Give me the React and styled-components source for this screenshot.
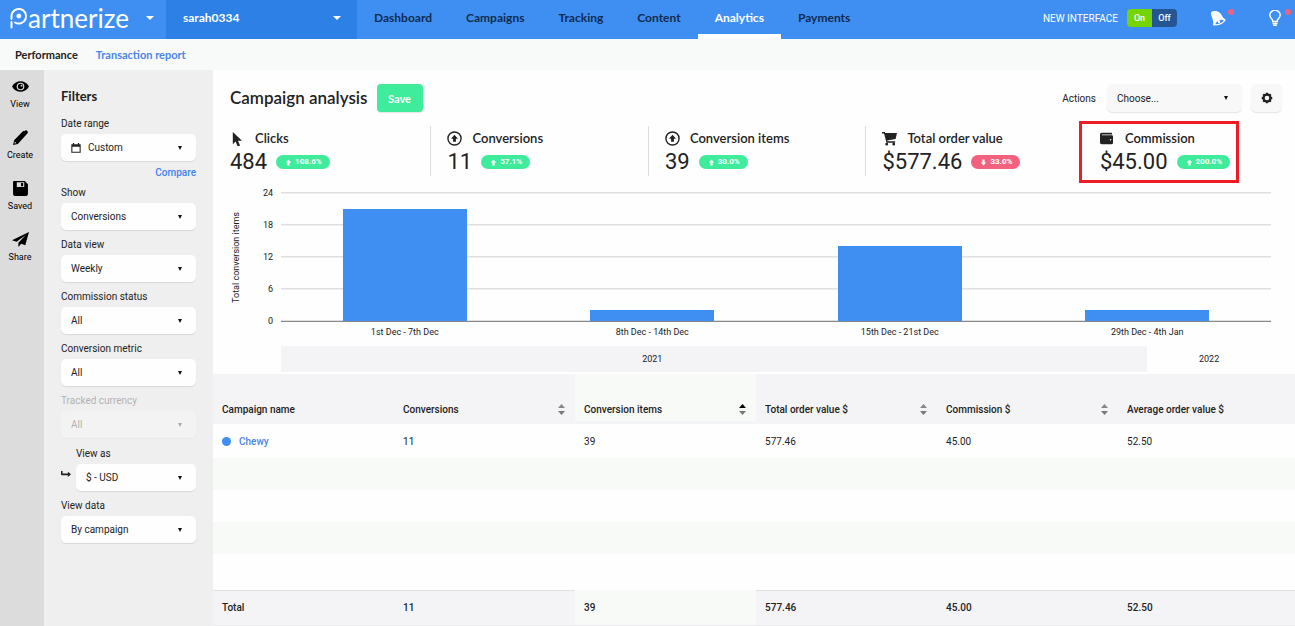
import React, { useState } from "react";
import styled, { createGlobalStyle } from "styled-components";
import { FaWallet } from "react-icons/fa";

const NAV = [
  "Dashboard",
  "Campaigns",
  "Tracking",
  "Content",
  "Analytics",
  "Payments",
];

const METRICS = [
  { icon: "cursor", label: "Clicks", value: "484", change: "108.6%" },
  { icon: "circleUp", label: "Conversions", value: "11", change: "57.1%" },
  { icon: "circleUp", label: "Conversion items", value: "39", change: "30.0%" },
  {
    icon: "cart",
    label: "Total order value",
    value: "$577.46",
    change: "33.0%",
    down: true,
  },
  {
    icon: "wallet",
    label: "Commission",
    value: "$45.00",
    change: "200.0%",
    marked: true,
  },
];

const CHART_MAX = 24;
const TICKS = [24, 18, 12, 6, 0];
const BARS = [
  { label: "1st Dec - 7th Dec", value: 21 },
  { label: "8th Dec - 14th Dec", value: 2 },
  { label: "15th Dec - 21st Dec", value: 14 },
  { label: "29th Dec - 4th Jan", value: 2 },
];

const COLUMNS = [
  { name: "Campaign name" },
  { name: "Conversions", value: "11", sort: true },
  { name: "Conversion items", value: "39", sort: true, active: true },
  { name: "Total order value $", value: "577.46", sort: true },
  { name: "Commission $", value: "45.00", sort: true },
  { name: "Average order value $", value: "52.50" },
];

const Icon = ({ name, size = 16 }) => {
  const shapes = {
    eye: (
      <>
        <path d="M0 8C2 4.400 5 3 8 3s6 1.400 8 5c-2 3.600-5 5-8 5S2 11.600 0 8z" />
        <circle cx="8" cy="8" r="3.600" fill="#dcdcdc" />
        <circle cx="8" cy="8" r="2.500" />
        <circle cx="9" cy="7.200" r="0.900" fill="#dcdcdc" />
      </>
    ),
    pencil: (
      <path d="M1 15l1-4.500 8.300-8.300c.3-.3.800-.3 1.100 0l.4-.4c.8-.8 1.900-.8 2.600 0s.7 1.700 0 2.500L5.500 14 1 15zm1.300-1.300l1.900-.4-1.500-1.500-.4 1.900z" />
    ),
    save: (
      <path
        fillRule="evenodd"
        d="M2 1h10l3 3v9.500c0 .8-.7 1.500-1.500 1.500h-11C1.700 15 1 14.300 1 13.500V2c0-.6.400-1 1-1zm2.500 1v4.500h7V2h-7zM8.500 2.800h2v3h-2z"
      />
    ),
    plane: (
      <path d="M16 1L0 8.700l4.300 1.500L13 3.700 6 11v4l2.700-3 3.800 1.400L16 1z" />
    ),
    cursor: <path d="M3 1v13l3-2.800 2.200 5.300 2.500-1-2.200-5.200h4.300L3 1z" />,
    circleUp: (
      <>
        <circle
          cx="8"
          cy="8"
          r="7"
          fill="none"
          stroke="currentColor"
          strokeWidth="1.500"
        />
        <path d="M8 4l3.700 4.200H9.500V11.500h-3V8.200H4.300z" />
      </>
    ),
    cart: (
      <path d="M0 1h3l.5 1.200H16l-1.500 6.300L5.500 10l.3 1H14v1.500H4.800L2.200 2.600H0zM5 12.500a1.500 1.500 0 110 3 1.500 1.500 0 010-3zm7.500 0a1.500 1.500 0 110 3 1.500 1.500 0 010-3z" />
    ),
    calendar: (
      <path
        fillRule="evenodd"
        d="M3 0h2v2h6V0h2v2h2.500v13.500H.5V2H3zM2.200 6v7.800h11.600V6z"
      />
    ),
    bell: (
      <>
        <path d="M2.200 1.400C6.400.2 10.500 2 12 5.800c.6 1.700 1.600 2.500 3 3.200.7.400.8 1.200.2 1.900-2.400 2.800-7 4.800-10.900 4.700-1 0-1.500-.7-1.200-1.500C4.200 10 .7 6.800 1 2.700c.1-.7.400-1.100 1.200-1.300z" />
        <ellipse
          cx="9.500"
          cy="12"
          rx="4.300"
          ry="1.500"
          transform="rotate(-24 9.500 12)"
          fill="#3f8ff3"
        />
        <circle cx="9" cy="12" r="1.200" />
      </>
    ),
    bulb: (
      <g fill="none" stroke="currentColor" strokeWidth="1.500">
        <path d="M5.700 11.500V10.200C4.600 8.700 2.800 7.500 2.800 5.100a5.200 4.800 0 0110.400 0c0 2.400-1.800 3.600-2.900 5.100v1.300zM5.500 13.400h5M6.200 15.200h3.600" />
      </g>
    ),
    gear: (
      <>
        <circle
          cx="8"
          cy="8"
          r="4.600"
          fill="none"
          stroke="currentColor"
          strokeWidth="3"
        />
        <path
          d="M8 1v3M8 12v3M1 8h3M12 8h3M3 3l2 2M11 11l2 2M13 3l-2 2M5 11l-2 2"
          stroke="currentColor"
          strokeWidth="3"
        />
      </>
    ),
    turn: (
      <path d="M0 3h2.500v4H11V4.200L16 8.500l-5 4.300V10H1.500A1.500 1.500 0 010 8.500z" />
    ),
    up: <path d="M8 1l6 7h-3.500v7h-5V8H2z" />,
    down: <path d="M8 15l6-7h-3.500V1h-5v7H2z" />,
  };
  if (name === "wallet") return <FaWallet size={size} />;
  return (
    <svg
      width={size}
      height={size}
      viewBox="0 0 16 16"
      fill="currentColor"
      aria-hidden="true"
    >
      {shapes[name]}
    </svg>
  );
};

const Field = ({ id, label, value, icon, disabled, children }) => (
  <FieldBox $disabled={disabled}>
    <Label htmlFor={id}>{label}</Label>
    <SelectBox $icon={icon}>
      {icon && <Icon name={icon} size={10} />}
      <select id={id} disabled={disabled} defaultValue={value}>
        <option>{value}</option>
      </select>
    </SelectBox>
    {children}
  </FieldBox>
);

const App = () => {
  const [newInterface, setNewInterface] = useState(true);

  return (
    <Page>
      <GlobalStyle />
      <Header>
        <Brand type="button" aria-label="Partnerize">
          <LogoMark viewBox="0 0 18 22" aria-hidden="true">
            <path d="M1.500 12V9.500A7.300 7.300 0 1 1 5 15.500M1.500 15V20.500" />
            <circle cx="8.800" cy="9" r="2" />
          </LogoMark>
          <LogoText>artnerize</LogoText>
          <Caret />
        </Brand>
        <Account type="button">
          sarah0334
          <Caret />
        </Account>
        <Nav>
          {NAV.map((item) => (
            <NavLink href="#" key={item} $active={item === "Analytics"}>
              {item}
            </NavLink>
          ))}
        </Nav>
        <HeaderTools>
          <span>NEW INTERFACE</span>
          <Toggle>
            <ToggleButton
              type="button"
              $on={newInterface}
              onClick={() => setNewInterface(true)}
            >
              On
            </ToggleButton>
            <ToggleButton
              type="button"
              $on={!newInterface}
              onClick={() => setNewInterface(false)}
            >
              Off
            </ToggleButton>
          </Toggle>
          <IconButton type="button" aria-label="Notifications">
            <Icon name="bell" />
          </IconButton>
          <IconButton type="button" aria-label="Tips">
            <Icon name="bulb" />
          </IconButton>
        </HeaderTools>
      </Header>

      <SubNav>
        <SubLink href="#" $current>
          Performance
        </SubLink>
        <SubLink href="#">Transaction report</SubLink>
      </SubNav>

      <Body>
        <Rail>
          <RailButton type="button">
            <Icon name="eye" size={17} />
            View
          </RailButton>
          <RailButton type="button">
            <Icon name="pencil" size={17} />
            Create
          </RailButton>
          <RailButton type="button">
            <Icon name="save" size={17} />
            Saved
          </RailButton>
          <RailButton type="button">
            <Icon name="plane" size={17} />
            Share
          </RailButton>
        </Rail>

        <Filters>
          <FiltersTitle>Filters</FiltersTitle>
          <Field id="range" label="Date range" value="Custom" icon="calendar">
            <Compare href="#">Compare</Compare>
          </Field>
          <Field id="show" label="Show" value="Conversions" />
          <Field id="data-view" label="Data view" value="Weekly" />
          <Field id="status" label="Commission status" value="All" />
          <Field id="metric" label="Conversion metric" value="All" />
          <Field id="currency" label="Tracked currency" value="All" disabled />
          <Nested>
            <Icon name="turn" size={10} />
            <Field id="view-as" label="View as" value="$ - USD" />
          </Nested>
          <Field id="view-data" label="View data" value="By campaign" />
        </Filters>

        <Main>
          <TitleRow>
            <Title>Campaign analysis</Title>
            <Save type="button">Save</Save>
            <ActionsLabel htmlFor="actions">Actions</ActionsLabel>
            <ActionsSelect>
              <select id="actions" defaultValue="Choose...">
                <option>Choose...</option>
              </select>
            </ActionsSelect>
            <Settings type="button" aria-label="Settings">
              <Icon name="gear" size={12} />
            </Settings>
          </TitleRow>

          <Metrics>
            {METRICS.map((m) => (
              <Metric key={m.label} $marked={m.marked}>
                <MetricLabel>
                  <Icon name={m.icon} size={m.icon === "wallet" ? 13 : 15} />
                  {m.label}
                </MetricLabel>
                <MetricValue>
                  {m.value}
                  <Badge $down={m.down}>
                    <Icon name={m.down ? "down" : "up"} size={7} />
                    {m.change}
                  </Badge>
                </MetricValue>
              </Metric>
            ))}
          </Metrics>

          <Chart>
            <AxisTitle>Total conversion items</AxisTitle>
            <Ticks>
              {TICKS.map((t) => (
                <span key={t}>{t}</span>
              ))}
            </Ticks>
            <Plot>
              {BARS.map((b) => (
                <BarSlot key={b.label}>
                  <Bar style={{ height: `${(b.value / CHART_MAX) * 100}%` }} />
                </BarSlot>
              ))}
            </Plot>
            <BarLabels>
              {BARS.map((b) => (
                <span key={b.label}>{b.label}</span>
              ))}
            </BarLabels>
            <Years>
              <Year $span={6} $shaded>
                2021
              </Year>
              <Year $span={1} $shaded />
              <Year $span={1}>2022</Year>
            </Years>
          </Chart>

          <Table>
            <thead>
              <tr>
                {COLUMNS.map((c) => (
                  <HeadCell key={c.name} $active={c.active}>
                    <HeadInner>
                      {c.name}
                      {c.sort && (
                        <Sort type="button" aria-label={`Sort by ${c.name}`}>
                          <svg width="7" height="11" viewBox="0 0 7 11">
                            <path
                              d="M0 4L3.500 0 7 4z"
                              fill={c.active ? "#000" : "#85868a"}
                            />
                            <path d="M0 7L3.500 11 7 7z" fill="#77787c" />
                          </svg>
                        </Sort>
                      )}
                    </HeadInner>
                  </HeadCell>
                ))}
              </tr>
            </thead>
            <tbody>
              <Row>
                <td>
                  <Campaign href="#">Chewy</Campaign>
                </td>
                {COLUMNS.slice(1).map((c) => (
                  <td key={c.name}>{c.value}</td>
                ))}
              </Row>
              {[1, 2, 3, 4].map((n) => (
                <Row key={n}>
                  <td colSpan={COLUMNS.length} />
                </Row>
              ))}
            </tbody>
            <tfoot>
              <tr>
                {COLUMNS.map((c) => (
                  <FootCell key={c.name} $active={c.active}>
                    {c.value || "Total"}
                  </FootCell>
                ))}
              </tr>
            </tfoot>
          </Table>
        </Main>
      </Body>
    </Page>
  );
};

const GlobalStyle = createGlobalStyle`
  *,
  *::before,
  *::after {
    box-sizing: border-box;
  }

  body {
    margin: 0;
    background: #fefefe;
    color: #222;
    font-family: Roboto, sans-serif;
    font-size: 10px;
  }

  button,
  select {
    border: none;
    padding: 0;
    font: inherit;
    color: inherit;
    cursor: pointer;
  }

  a {
    text-decoration: none;
  }

  svg {
    display: block;
    flex: none;
  }
`;

const Page = styled.div`
  display: flex;
  flex-direction: column;
  min-height: 100vh;
`;

const Header = styled.header`
  display: flex;
  height: 39px;
  background: #3f8ff3;
  color: #fff;
`;

const Brand = styled.button`
  display: flex;
  align-items: center;
  width: 166px;
  padding: 0 12px 4px 10px;
  background: none;
`;

const LogoMark = styled.svg`
  width: 18px;
  height: 22px;

  path {
    fill: none;
    stroke: #fff;
    stroke-width: 2;
    stroke-linecap: round;
  }

  circle {
    fill: #fff;
    stroke: #fff;
  }
`;

const LogoText = styled.span`
  font-family: Lato, sans-serif;
  font-size: 26px;
  line-height: 34px;
`;

const Caret = styled.span`
  margin-left: auto;
  border: 4px solid transparent;
  border-top-color: #fff;
  border-bottom: none;
`;

const Account = styled.button`
  display: flex;
  align-items: center;
  width: 191px;
  padding: 0 16px 4px 17px;
  background: #2d80e5;
  font-family: Lato, sans-serif;
  font-size: 12px;
  font-weight: 700;
`;

const Nav = styled.nav`
  display: flex;
`;

const NavLink = styled.a`
  padding: 0 17px;
  border-bottom: 5px solid ${(p) => (p.$active ? "#fff" : "transparent")};
  color: ${(p) => (p.$active ? "#fff" : "#0f2b4d")};
  font-family: Lato, sans-serif;
  font-size: 12px;
  font-weight: 700;
  line-height: 36px;
`;

const HeaderTools = styled.div`
  display: flex;
  align-items: center;
  gap: 9px;
  margin-left: auto;
  padding-right: 4px;
  padding-bottom: 3px;
`;

const Toggle = styled.div`
  display: flex;
  overflow: hidden;
  border-radius: 4px;
`;

const ToggleButton = styled.button`
  width: 25px;
  height: 18px;
  background: ${(p) => (p.$on ? "#75d406" : "#235693")};
  color: #fff;
  font-size: 9px;
  font-weight: 500;
`;

const IconButton = styled.button`
  position: relative;
  display: flex;
  margin-left: 24px;
  padding-right: 8px;
  background: none;

  &::after {
    content: "";
    position: absolute;
    top: -1px;
    right: 0;
    width: 6px;
    height: 6px;
    border-radius: 50%;
    background: #f0607f;
  }
`;

const SubNav = styled.nav`
  display: flex;
  gap: 18px;
  padding: 0 15px;
  background: #f8faf9;
  font-family: Lato, sans-serif;
  font-size: 11px;
  font-weight: 700;
  line-height: 31px;
`;

const SubLink = styled.a`
  color: ${(p) => (p.$current ? "#222" : "#4a86e8")};
`;

const Body = styled.div`
  display: flex;
  flex: 1;
`;

const Rail = styled.aside`
  display: flex;
  flex-direction: column;
  gap: 18px;
  width: 44px;
  padding-top: 8px;
  background: #dcdcdc;
`;

const RailButton = styled.button`
  display: flex;
  flex-direction: column;
  align-items: center;
  gap: 2px;
  width: 40px;
  background: none;
  color: #000;
  font-size: 9px;
  line-height: 14px;
`;

const Filters = styled.section`
  display: flex;
  flex-direction: column;
  gap: 5px;
  width: 169px;
  padding: 16px 17px 20px;
  background: #efefef;
`;

const FiltersTitle = styled.h2`
  margin: 0 0 3px;
  font-family: Lato, sans-serif;
  font-size: 13px;
  font-weight: 700;
  line-height: 20px;
`;

const FieldBox = styled.div`
  display: flex;
  flex: none;
  flex-direction: column;
  opacity: ${(p) => (p.$disabled ? 0.3 : 1)};
`;

const Label = styled.label`
  line-height: 20px;
`;

const SelectBox = styled.div`
  display: grid;
  align-items: center;
  border-radius: 5px;
  background: #fefefe;
  box-shadow: 0 1px 1px rgba(0, 0, 0, 0.1);

  select {
    grid-area: 1 / 1;
    height: 27px;
    padding: 0 24px 0 ${(p) => (p.$icon ? 27 : 10)}px;
    border-radius: 5px;
    background: none;
    appearance: none;
    opacity: 1;
  }

  > svg {
    grid-area: 1 / 1;
    margin-left: 10px;
  }

  &::after {
    content: "";
    grid-area: 1 / 1;
    justify-self: end;
    margin-right: 14px;
    border: 2px solid transparent;
    border-top: 4px solid #111;
    border-bottom: none;
    pointer-events: none;
  }
`;

const Compare = styled.a`
  align-self: flex-end;
  margin-top: 7px;
  color: #3c84f0;
  font-weight: 500;
  line-height: 10px;
`;

const Nested = styled.div`
  display: flex;
  align-items: flex-end;
  gap: 5px;
  margin-top: 1px;

  > svg {
    margin-bottom: 12px;
  }

  > div {
    flex: 1;
  }
`;

const Main = styled.main`
  flex: 1;
  min-width: 0;
`;

const TitleRow = styled.div`
  display: flex;
  align-items: center;
  padding: 14px 13px 14px 17px;
`;

const Title = styled.h1`
  margin: 0;
  font-family: Lato, sans-serif;
  font-size: 17px;
  font-weight: 600;
  line-height: 26px;
`;

const Save = styled.button`
  width: 46px;
  height: 28px;
  margin-left: 9px;
  border-radius: 4px;
  background: #3eec9b;
  color: #fff;
  font-family: Lato, sans-serif;
  font-size: 11px;
  font-weight: 700;
  box-shadow: 0 1px 1px rgba(0, 0, 0, 0.1);
`;

const ActionsLabel = styled.label`
  margin-left: auto;
`;

const ActionsSelect = styled(SelectBox)`
  width: 135px;
  margin: 0 9px 0 11px;
  background: #f8f8f8;

  select {
    height: 28px;
  }
`;

const Settings = styled.button`
  display: flex;
  align-items: center;
  justify-content: center;
  width: 31px;
  height: 28px;
  border-radius: 5px;
  background: #f8f8f8;
  box-shadow: 0 1px 1px rgba(0, 0, 0, 0.1);
`;

const Metrics = styled.section`
  display: grid;
  grid-template-columns: repeat(4, 20.1%) 1fr;
  padding-left: 1px;
  margin-left: -1px;
`;

const Metric = styled.div`
  position: relative;
  height: 50px;
  padding-left: 17px;

  & + & {
    padding-left: 16px;
    border-left: 1px solid #ddd;
  }

  ${(p) =>
    p.$marked &&
    `
    && {
      border-left-color: transparent;
    }

    &::after {
      content: "";
      position: absolute;
      top: -5px;
      left: -5px;
      width: 160px;
      height: 62px;
      border: 3px solid #ee1c25;
    }
  `}
`;

const MetricLabel = styled.div`
  display: grid;
  grid-template-columns: 25px 1fr;
  align-items: center;
  font-family: Lato, sans-serif;
  font-size: 13px;
  font-weight: 600;
  line-height: 24px;
`;

const MetricValue = styled.div`
  display: flex;
  align-items: center;
  gap: 9px;
  font-size: 22px;
  line-height: 24px;
`;

const Badge = styled.span`
  display: flex;
  align-items: center;
  gap: 3px;
  padding: 0 8px 0 9px;
  border-radius: 7px;
  background: ${(p) => (p.$down ? "#f2627f" : "#3eec9b")};
  color: #fff;
  font-size: 8px;
  font-weight: 700;
  line-height: 14px;
`;

const Chart = styled.section`
  display: grid;
  grid-template-columns: 12px 23px 1fr;
  column-gap: 8px;
  padding: 11px 24px 2px 17px;
  font-size: 9px;
`;

const AxisTitle = styled.div`
  align-self: center;
  justify-self: center;
  line-height: 12px;
  writing-mode: vertical-rl;
  transform: rotate(180deg);
  white-space: nowrap;
`;

const Ticks = styled.div`
  display: flex;
  flex-direction: column;
  justify-content: space-between;
  height: 140px;
  text-align: right;
  line-height: 12px;
`;

const Plot = styled.div`
  display: grid;
  grid-template-columns: repeat(4, 1fr);
  align-self: center;
  height: 130px;
  padding-top: 1px;
  border-bottom: 1px solid #888;
  background: repeating-linear-gradient(
    #dfdfdf 0,
    #dfdfdf 1px,
    #fefefe 2px,
    #fefefe 32px
  );
`;

const BarSlot = styled.div`
  display: flex;
  align-items: flex-end;
  justify-content: center;
`;

const Bar = styled.div`
  width: 50%;
  background: #3f8ff3;
`;

const BarLabels = styled.div`
  display: grid;
  grid-column: 3;
  grid-template-columns: repeat(4, 1fr);
  line-height: 10px;
  text-align: center;
`;

const Years = styled.div`
  display: grid;
  grid-column: 3;
  grid-template-columns: repeat(8, 1fr);
  margin-top: 9px;
  line-height: 26px;
  text-align: center;
`;

const Year = styled.div`
  grid-column: span ${(p) => p.$span};
  background: ${(p) => (p.$shaded ? "#f4f4f7" : "none")};
`;

const Table = styled.table`
  width: 100%;
  table-layout: fixed;
  border-collapse: collapse;

  td,
  th {
    padding: 0 10px 0 9px;
    text-align: left;
  }
`;

const HeadCell = styled.th`
  width: 16.73%;
  height: 50px;
  background: ${(p) => (p.$active ? "#f8faf8" : "#f4f4f7")};
  box-shadow: inset 0 -3px #f4f4f7;
  font-weight: 500;

  &:last-child {
    width: auto;
  }
`;

const HeadInner = styled.div`
  display: flex;
  align-items: center;
  justify-content: space-between;
  padding-top: 20px;
`;

const Sort = styled.button`
  background: none;
`;

const Row = styled.tr`
  height: 32px;

  &:first-child {
    height: 34px;
  }

  &:last-child {
    height: 36px;
  }

  &:nth-child(even) {
    background: #f8faf8;
  }
`;

const Campaign = styled.a`
  display: flex;
  align-items: center;
  gap: 8px;
  color: #4a86e8;
  font-weight: 500;

  &::before {
    content: "";
    width: 9px;
    height: 9px;
    border-radius: 50%;
    background: #3f8ff3;
  }
`;

const FootCell = styled.td`
  height: 35px;
  border-top: 1px solid ${(p) => (p.$active ? "#f8faf8" : "#e2e2e4")};
  border-bottom: 1px solid #ececee;
  background: ${(p) => (p.$active ? "#f8faf8" : "#f4f4f7")};
  font-weight: 500;
`;

export default App;
